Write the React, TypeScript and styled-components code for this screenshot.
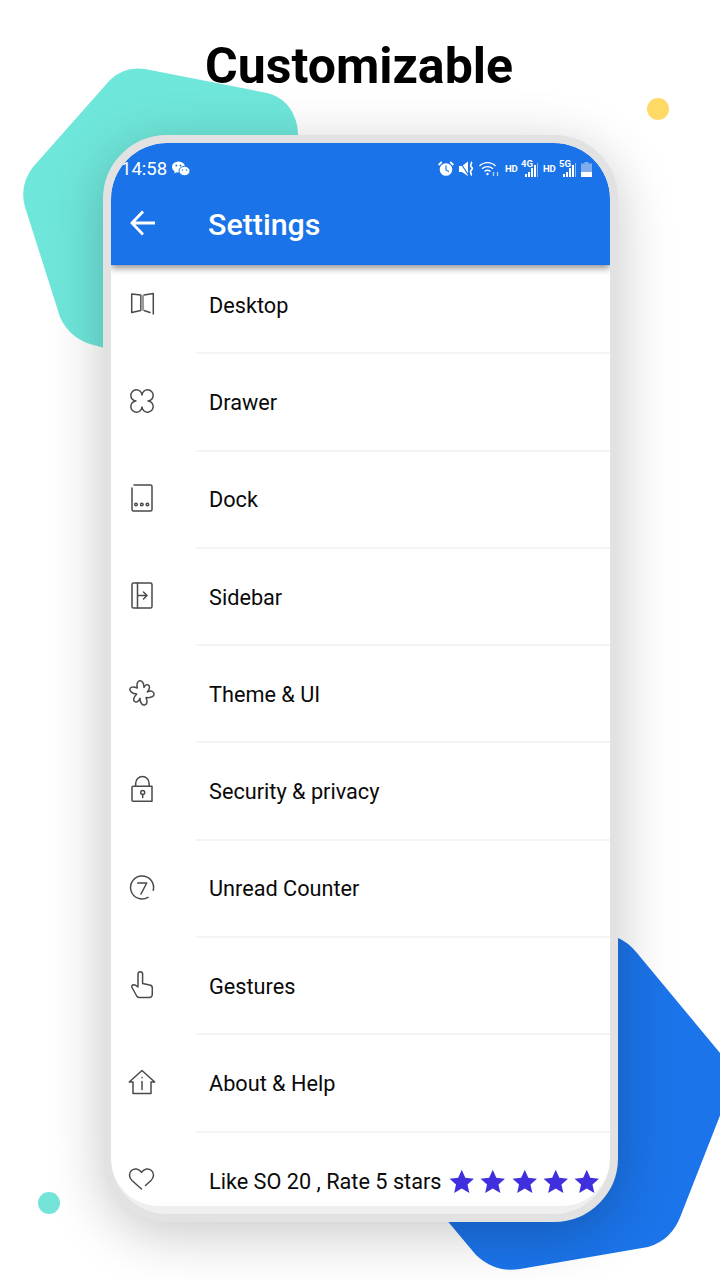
import React from "react";
import styled, { createGlobalStyle } from "styled-components";

const Global = createGlobalStyle`
  html, body { margin: 0; padding: 0; background: #fff; }
  body { font-family: Roboto, "Liberation Sans", sans-serif; }
`;

const Page = styled.div`
  position: relative;
  width: 720px;
  height: 1280px;
  overflow: hidden;
  background: #fff;
`;

const Backdrop = styled.svg`
  position: absolute;
  inset: 0;
  width: 720px;
  height: 1280px;
`;

const Dot = styled.span<{ $x: number; $y: number; $c: string }>`
  position: absolute;
  left: ${(p) => p.$x - 11}px;
  top: ${(p) => p.$y - 11}px;
  width: 22px;
  height: 22px;
  border-radius: 50%;
  background: ${(p) => p.$c};
`;

const Title = styled.h1`
  position: relative;
  margin: 0;
  height: 135px;
  padding: 36px 2px 0 0;
  box-sizing: border-box;
  text-align: center;
  font: 700 50px/60px Roboto, sans-serif;
  color: #000;
`;

const Phone = styled.div`
  position: relative;
  margin-left: 103px;
  width: 515px;
  height: 1087px;
  box-sizing: border-box;
  border: 8px solid #e2e2e2;
  border-radius: 64px;
  background: #efefef;
  box-shadow: 0 12px 55px rgba(0, 0, 0, 0.22);
  overflow: hidden;
`;

const Screen = styled.div`
  height: 1063px;
  background: #fff;
  border-radius: 56px 56px 48px 48px;
  overflow: hidden;
`;

const Header = styled.header`
  position: relative;
  z-index: 1;
  height: 122px;
  box-sizing: border-box;
  background: #1a73e8;
  border-bottom: 1px solid #126ff0;
  box-shadow: 0 3px 7px rgba(0, 0, 0, 0.45);
  color: #fff;
`;

const StatusBar = styled.div`
  display: flex;
  align-items: center;
  height: 52px;
  padding: 0 18px 0 10px;
  justify-content: space-between;
`;

const StatusGroup = styled.div`
  display: flex;
  align-items: center;
  gap: 5px;
`;

const Clock = styled.span`
  font: 400 18.5px/22px Roboto, sans-serif;
  color: #fff;
`;

const NetTag = styled.span`
  width: 12px;
  font: 700 9.5px/10px Roboto, sans-serif;
  letter-spacing: -0.2px;
  color: #fff;
`;

const Toolbar = styled.div`
  display: flex;
  align-items: center;
  height: 60px;
  padding-left: 18px;
`;

const BackButton = styled.span`
  display: flex;
  width: 79px;
  margin-top: -5px;
`;

const ToolbarTitle = styled.span`
  font: 500 30.4px/36px Roboto, sans-serif;
  color: #fff;
`;

const List = styled.div`
  margin-top: -8px;
`;

const Row = styled.div`
  display: flex;
  align-items: center;
  height: 97.3px;
  padding-left: 17px;
`;

const RowIcon = styled.svg`
  flex: none;
  width: 28px;
  height: 28px;
  margin-top: -4px;
  overflow: visible;
  fill: none;
  stroke: #4a4a4a;
  stroke-width: 1.5;
  stroke-linecap: round;
  stroke-linejoin: round;
`;

const RowBody = styled.div<{ $last?: boolean }>`
  flex: 1;
  display: flex;
  align-items: center;
  align-self: stretch;
  margin-left: 40px;
  padding-left: 13px;
  box-sizing: border-box;
  border-bottom: ${(p) => (p.$last ? "none" : "2px solid #f4f4f4")};
`;

const RowLabel = styled.span`
  font: 400 21.7px/28px Roboto, sans-serif;
  color: #0a0a0a;
  margin-top: 2px;
`;

const Stars = styled.span`
  display: flex;
  margin-left: 7.5px;
  gap: 5.8px;
  margin-top: 0;
`;

const Star = () => (
  <svg width="25.5" height="25" viewBox="0 0 24 24">
    <path fill="#3f2fdc" d="M12 .8l3.4 7.6 8.3.9-6.2 5.5 1.8 8.2L12 18.8 4.7 23l1.8-8.2L.3 9.3l8.3-.9z" />
  </svg>
);

const items: { label: string; icon: React.ReactNode }[] = [
  {
    label: "Desktop",
    icon: (
      <>
        <path d="M3.7 4l9 1v15.500l-9 2V4z" />
        <path d="M16 5l9.300-1.500V24" />
        <path d="M16 20.500l6 2" />
        <rect x="12.700" y="5" width="3.300" height="15.500" fill="#9a9a9a" stroke="none" />
      </>
    ),
  },
  {
    label: "Drawer",
    icon: <path d="M14 8A5.600 5.600 0 1 1 20 14A5.600 5.600 0 1 1 14 20A5.600 5.600 0 1 1 8 14A5.600 5.600 0 1 1 14 8" />,
  },
  {
    label: "Dock",
    icon: (
      <>
        <path d="M6 1h16.500A1.500 1.500 0 0 1 24 2.500v23a1.500 1.500 0 0 1-1.500 1.500h-17A1.500 1.500 0 0 1 4 25.500V4" />
        <circle cx="8" cy="20.500" r="1.300" />
        <circle cx="13.800" cy="20.500" r="1.300" />
        <circle cx="19.400" cy="20.500" r="1.300" />
      </>
    ),
  },
  {
    label: "Sidebar",
    icon: (
      <>
        <rect x="4" y="1" width="20" height="25" rx="1.500" />
        <path d="M9.500 1v25M9.500 13.500h9.500M15.500 10l3.500 3.500-3.500 3.500" />
      </>
    ),
  },
  {
    label: "Theme & UI",
    icon: (
      <path d="M9.300 9C7 0 16-1 16 8.500C18 3 25 6 19.300 13C27 9 30 20 18 18.500C22 28 12 29 12 19.200C10 26 1 23 8.700 15C-1 14 0 5 9.300 9Z" />
    ),
  },
  {
    label: "Security & privacy",
    icon: (
      <>
        <path d="M7.700 10V7.200a6.700 6.700 0 0 1 13.400 0V10" />
        <path d="M4 11.200a1 1 0 0 1 1-1h19v15H5a1 1 0 0 1-1-1V11.200z" />
        <circle cx="14.700" cy="16.500" r="2" />
        <path d="M14.700 18.500V21.500" />
      </>
    ),
  },
  {
    label: "Unread Counter",
    icon: (
      <>
        <path d="M20 24.300a11.500 11.500 0 1 1 5.200-7" />
        <path d="M9.700 10h9L13 21" />
      </>
    ),
  },
  {
    label: "Gestures",
    icon: (
      <path d="M10 15V3a2.300 2.300 0 0 1 4.600 0v9.500l7 1.600a3 3 0 0 1 2.700 3v6c0 1.800-1.200 3.400-3 3.400H11.500c-1.200 0-2.200-.6-2.800-1.500L4 16.500c-.8-1.500.2-2.800 1.500-2.800 1.500 0 3 1 4.500 2.300" />
    ),
  },
  {
    label: "About & Help",
    icon: (
      <>
        <path d="M1.300 14L14 2.500 26.700 14h-3.700v11.500H5V14H1.300z" />
        <path d="M14 13.500v8M14 9.500v.2" />
      </>
    ),
  },
  {
    label: "Like SO 20 , Rate 5 stars",
    icon: (
      <path d="M13.500 24L4 15.500C.8 12.500.7 8 3.500 5.500c3-2.600 7.200-2 10 1.800 2.800-3.800 7-4.400 10-1.800 2.800 2.500 2.700 7-.5 10L17.500 20.500" />
    ),
  },
];

const WeChat = () => (
  <svg width="18" height="16" viewBox="0 0 18 16" fill="#fff">
    <ellipse cx="6.500" cy="6" rx="6.500" ry="5.500" />
    <path d="M3 9.500l-.8 3 3-1.700z" />
    <ellipse cx="12.500" cy="10" rx="5.500" ry="4.700" stroke="#1a73e8" strokeWidth="1" />
    <circle cx="4.300" cy="4.500" r=".9" fill="#1a73e8" />
    <circle cx="8.500" cy="4.500" r=".9" fill="#1a73e8" />
    <circle cx="10.500" cy="9" r=".7" fill="#1a73e8" />
    <circle cx="14.500" cy="9" r=".7" fill="#1a73e8" />
  </svg>
);

const Alarm = () => (
  <svg width="16" height="16" viewBox="0 0 16 16">
    <circle cx="8" cy="8.500" r="6.300" fill="#fff" />
    <path d="M8 4.500v4.500l3 1.500" stroke="#1a73e8" strokeWidth="1.200" fill="none" />
    <path d="M.7 4l3-3M15.300 4l-3-3" stroke="#fff" strokeWidth="1.800" />
  </svg>
);

const Mute = () => (
  <svg width="15" height="16" viewBox="0 0 15 16" fill="none">
    <path d="M0 5h3l6-4.500V15L3 11H0z" fill="#fff" />
    <path d="M1 1l9 14" stroke="#1a73e8" strokeWidth="1.200" />
    <path d="M12 1c2 1.500-1.500 2.500 0 4.500s2 1.500 0 4 1.500 2.500 0 5" stroke="#fff" strokeWidth="1.700" />
  </svg>
);

const Wifi = () => (
  <svg width="21" height="16" viewBox="0 0 21 16" fill="none" stroke="#fff" strokeWidth="1.300">
    <path d="M.5 5c4.500-4.500 11.500-4.500 16 0M3 7.800c3.200-3 7.800-3 11 0M5.500 10.500c2-1.700 4-1.700 6 0" />
    <circle cx="8.500" cy="13" r="1.200" fill="#fff" stroke="none" />
    <path d="M14.500 11v4M18.500 15v-4" stroke="#b9d3f7" />
  </svg>
);

const Signal = () => (
  <svg width="13" height="14" viewBox="0 0 13 14" fill="#fff">
    <rect x="0" y="11" width="2" height="3" />
    <rect x="3" y="9" width="2" height="5" />
    <rect x="6" y="5" width="2" height="9" />
    <rect x="9" y="2" width="2" height="12" />
    <rect x="12" y="0" width="1" height="14" fill="#8fb9f3" />
  </svg>
);

const Network = styled.span`
  display: flex;
  align-items: flex-end;
  position: relative;
  width: 16px;
  height: 16px;
  justify-content: flex-end;
`;

const NetSup = styled.span`
  position: absolute;
  left: -1px;
  top: -2px;
  font: 700 9.500px/10px Roboto, sans-serif;
  color: #fff;
`;

const Battery = () => (
  <svg width="11" height="15" viewBox="0 0 11 15">
    <path d="M3.500 0h4v1.500H11V15H0V1.500h3.500z" fill="#7fadef" />
    <rect y="10" width="11" height="5" fill="#fff" />
  </svg>
);

export default function App() {
  return (
    <Page>
      <Global />
      <Backdrop viewBox="0 0 720 1280">
        <path
          fill="#6fe6da"
          d="M110 80Q124 66 145 69L267 93Q291 99 297 125L312 250L105 348L97 346Q70 340 60 317L25 207Q19 185 33 167Z"
        />
        <path
          fill="#1b74e9"
          d="M600 930L618 938Q628 942 637 953L730 1065V1090L681 1215Q672 1240 648 1247L520 1269Q495 1273 476 1255L440 1212Z"
        />
      </Backdrop>
      <Dot $x={658} $y={109} $c="#ffd966" />
      <Dot $x={49} $y={1203} $c="#74e4d8" />
      <Title>Customizable</Title>
      <Phone>
        <Screen>
          <Header>
            <StatusBar>
              <StatusGroup>
                <Clock>14:58</Clock>
                <WeChat />
              </StatusGroup>
              <StatusGroup>
                <Alarm />
                <Mute />
                <Wifi />
                <NetTag>HD</NetTag>
                <Network>
                  <NetSup>4G</NetSup>
                  <Signal />
                </Network>
                <NetTag>HD</NetTag>
                <Network>
                  <NetSup>5G</NetSup>
                  <Signal />
                </Network>
                <Battery />
              </StatusGroup>
            </StatusBar>
            <Toolbar>
              <BackButton>
                <svg width="28" height="28" viewBox="0 0 28 28" fill="none" stroke="#fff" strokeWidth="2.800">
                  <path d="M26 14H4M14 2.500L3 14 14 25.500" />
                </svg>
              </BackButton>
              <ToolbarTitle>Settings</ToolbarTitle>
            </Toolbar>
          </Header>
          <List>
            {items.map((it, i) => (
              <Row key={it.label}>
                <RowIcon viewBox="0 0 28 28">{it.icon}</RowIcon>
                <RowBody $last={i === items.length - 1}>
                  <RowLabel>{it.label}</RowLabel>
                  {i === items.length - 1 && (
                    <Stars>
                      <Star />
                      <Star />
                      <Star />
                      <Star />
                      <Star />
                    </Stars>
                  )}
                </RowBody>
              </Row>
            ))}
          </List>
        </Screen>
      </Phone>
    </Page>
  );
}
